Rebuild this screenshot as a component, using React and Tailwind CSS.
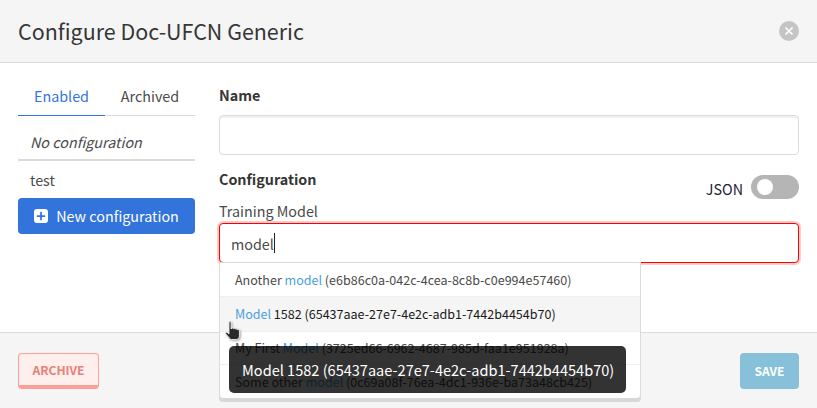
import { Plus, X } from "lucide-react"

const models = [
  { before: "Another ", match: "model", after: " (e6b86c0a-042c-4cea-8c8b-c0e994e57460)", h: "h-[34px]" },
  { before: "", match: "Model", after: " 1582 (65437aae-27e7-4e2c-adb1-7442b4454b70)", h: "h-[35px]", active: true },
  { before: "My First ", match: "Model", after: " (3725ed66-6962-4687-985d-faa1e951928a)", h: "h-[33px]" },
  { before: "Some other ", match: "model", after: " (0c69a08f-76ea-4dc1-936e-ba73a48cb425)", h: "h-[33px]" },
]

function HandCursor() {
  return (
    <svg width="19" height="20" viewBox="0 0 17 20" className="absolute left-[224px] top-[321px] drop-shadow-[1px_1px_1px_rgba(0,0,0,0.35)]">
      <path d="M4 1.500c0-1.200 2-1.200 2 0V8l.6-.6c.5-.6 1.600-.4 1.900.3.5-.6 1.700-.4 2 .4.6-.5 1.800-.2 2 .6.6-.4 1.900-.1 1.900 1V15c0 1.500-1 3-2.500 3.500H6.500C5 18.500 4.500 17 3.500 16L.8 13c-.8-1 .4-2.200 1.400-1.500L4 13V1.500Z" fill="#2a2a2a" stroke="#fff" strokeWidth="0.8" />
    </svg>
  )
}

export default function App() {
  return (
    <div className="relative flex flex-col h-[408px] w-[817px] overflow-hidden bg-white text-[14.33px] leading-6 text-[#4a4a4a] font-['Noto_Sans_CJK_SC',sans-serif]">
      <header className="flex items-center justify-between h-[63px] shrink-0 px-[18px] bg-[#f5f5f5] border-b border-[#dbdbdb]">
        <h1 className="text-[21.45px] leading-[30px] text-[#363636]">Configure Doc-UFCN Generic</h1>
        <button className="flex items-center justify-center w-5 h-5 rounded-full bg-[#c4c4c4] text-white">
          <X size={12} strokeWidth={3.5} />
        </button>
      </header>

      <main className="flex flex-1 min-h-0 pt-5 px-[18px] gap-6">
        <aside className="w-[177px] shrink-0">
          <div className="flex h-[33px] border-b border-[#dbdbdb]">
            <span className="flex items-center justify-center w-[87px] -mb-px pb-[6px] border-b border-[#3273dc] text-[#3273dc]">Enabled</span>
            <span className="flex items-center justify-center w-[90px] pb-[6px]">Archived</span>
          </div>
          <div className="flex items-center h-[45px] pt-[9px] pl-3 italic border-b-2 border-[#dbdbdb]">No configuration</div>
          <div className="flex items-center h-[37px] pl-3">test</div>
          <button className="flex items-center justify-center gap-2 w-full h-[36px] rounded bg-[#3273dc] text-white">
            <span className="flex items-center justify-center w-[14px] h-[14px] rounded-[3px] bg-white text-[#3273dc]">
              <Plus size={12} strokeWidth={3.5} />
            </span>
            New configuration
          </button>
        </aside>

        <section className="flex-1 min-w-0">
          <label className="block h-[24px] font-semibold text-[#363636]">Name</label>
          <input className="block w-full h-[40px] mt-2 rounded border border-[#dbdbdb] bg-white shadow-[inset_0_2px_0_rgba(10,10,10,0.06)] outline-none" />
          <div className="flex justify-between mt-[13px] h-[31px]">
            <label className="-mt-px font-semibold text-[#363636]">Configuration</label>
            <div className="flex items-center gap-[8px] self-end h-[24px] text-[#1d2433]">
              <span className="pt-[4px]">JSON</span>
              <span className="flex items-center w-[48px] h-[24px] pl-[6px] rounded-full bg-[#b5b5b5]">
                <span className="w-[16px] h-[16px] rounded-full bg-white"></span>
              </span>
            </div>
          </div>
          <label className="block h-[24px]">Training Model</label>
          <div className="flex items-center h-[40px] pl-[11px] pr-3 rounded border border-[#ff0000] shadow-[0_0_0_2px_rgba(255,0,0,0.2)] bg-white">
            <span className="pt-px">model</span><span className="w-px h-[20px] bg-[#222]"></span>
          </div>
        </section>
      </main>

      <footer className="flex items-center justify-between h-[76px] shrink-0 pt-[1px] px-[18px] bg-[#f5f5f5] border-t border-[#dbdbdb]">
        <button className="w-[81px] h-[36px] rounded border border-[#fb9f99] border-b-[4px] bg-[#feeeec] text-[12.1px] font-bold text-[#e98079]">ARCHIVE</button>
        <button className="w-[59px] h-[36px] rounded bg-[#87c0d9] text-[12.1px] font-bold text-white">SAVE</button>
      </footer>

      <ul className="absolute left-[219px] top-[262px] w-[422px] rounded-b border border-[#dbdbdb] border-b-0 bg-white shadow-[0_4px_0_rgba(10,10,10,0.12)] text-[12.54px]">
        {models.map(m => (
          <li key={m.after} className={`flex items-center px-[15px] whitespace-pre border-b border-[#efefef] last:border-b-0 ${m.h} ${m.active ? "bg-[#f5f5f5] text-[#1a1a1a]" : ""}`}>
            {m.before}<span className="text-[#4a9fe0]">{m.match}</span>{m.after}
          </li>
        ))}
      </ul>

      <div className="absolute left-[229px] top-[346px] flex items-center w-[397px] h-[47px] pl-[13px] rounded-[5px] bg-[#000000]/80 text-[14.55px] text-white whitespace-pre">
        Model 1582 (65437aae-27e7-4e2c-adb1-7442b4454b70)
      </div>

      <HandCursor />
    </div>
  )
}
